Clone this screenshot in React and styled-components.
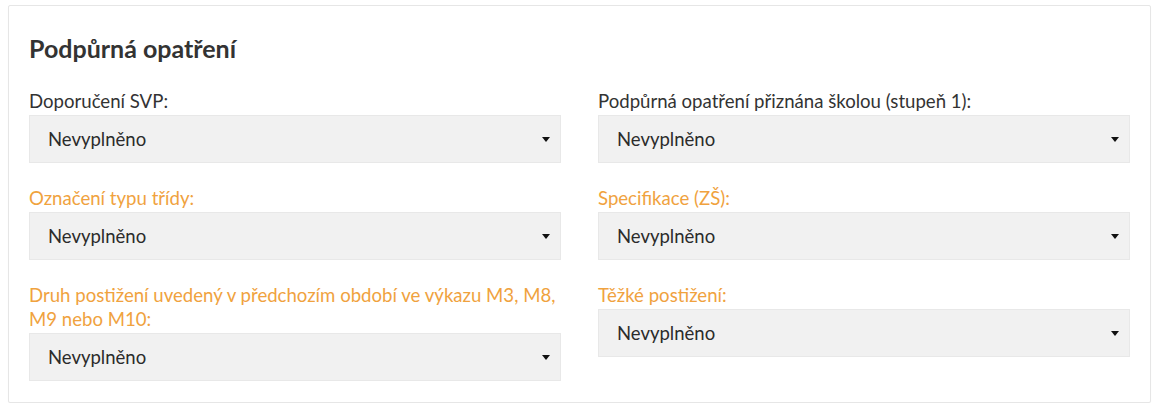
import React from "react";
import styled, { createGlobalStyle } from "styled-components";

const Global = createGlobalStyle`
  html, body { margin: 0; padding: 0; background: #fff; }
  body { font-family: Lato, "Open Sans", sans-serif; color: #333; }
  * { box-sizing: border-box; }
`;

const Card = styled.section`
  margin: 5px 0 0 8px;
  width: 1143px;
  height: 398px;
  border: 1px solid #e6e6e6;
  border-radius: 2px;
  box-shadow: 0 1px 1px rgba(0,0,0,0.04);
  padding: 27px 20px 0 20px;
  background: #fff;
`;

const Title = styled.h2`
  margin: 0 0 26px 0;
  font-size: 25px;
  line-height: 30px;
  font-weight: 700;
  color: #333;
`;

const Grid = styled.div`
  display: grid;
  grid-template-columns: 1fr 1fr;
  column-gap: 37px;
`;

const Column = styled.div`
  display: flex;
  flex-direction: column;
`;

const Field = styled.div`
  margin-bottom: 23px;
`;

const Label = styled.label`
  display: block;
  font-size: 18.6px;
  line-height: 24px;
  margin-bottom: 2px;
  color: ${(p) => (p.$warn ? "#f0a23e" : "#333")};
`;

const Select = styled.div`
  height: 48px;
  background: #f1f1f1;
  border: 1px solid #e8e8e8;
  display: flex;
  align-items: center;
  justify-content: space-between;
  padding: 0 10px 0 18px;
  font-size: 18.5px;
  color: #2b2b2b;
`;

const Caret = styled.span`
  width: 0;
  height: 0;
  border-left: 4.5px solid transparent;
  border-right: 4.5px solid transparent;
  border-top: 5px solid #111;
  margin-top: 1px;
`;

const SelectField = ({ label, warn }) => (
  <Field>
    <Label $warn={warn}>{label}</Label>
    <Select>
      <span>Nevyplněno</span>
      <Caret />
    </Select>
  </Field>
);

export default function App() {
  return (
    <>
      <Global />
      <Card>
        <Title>Podpůrná opatření</Title>
        <Grid>
          <Column>
            <SelectField label="Doporučení SVP:" />
            <SelectField label="Označení typu třídy:" warn />
            <SelectField
              label="Druh postižení uvedený v předchozím období ve výkazu M3, M8, M9 nebo M10:"
              warn
            />
          </Column>
          <Column>
            <SelectField label="Podpůrná opatření přiznána školou (stupeň 1):" />
            <SelectField label="Specifikace (ZŠ):" warn />
            <SelectField label="Těžké postižení:" warn />
          </Column>
        </Grid>
      </Card>
    </>
  );
}
